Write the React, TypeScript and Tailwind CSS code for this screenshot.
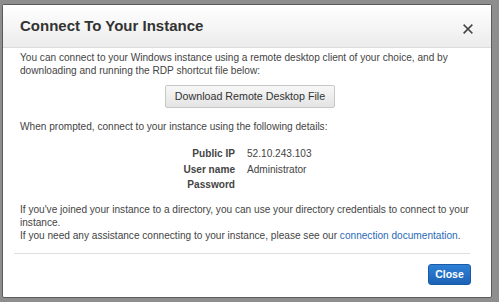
export default function App() {
  return (
    <div className="w-[499px] h-[302px] bg-[#8e8e8e] pt-[4px] pl-[2px] overflow-hidden font-['Liberation_Sans',Arial,sans-serif]">
      <div className="w-[490px] h-[294px] bg-white border border-[#5a5a5a] rounded-[2px] flex flex-col">
        {/* Header */}
        <div className="h-[43px] shrink-0 flex items-center justify-between pl-[17px] pr-[17px] bg-gradient-to-b from-white to-[#ececec] border-b border-[#dcdcdc]">
          <h1 className="text-[15px] font-bold text-[#333]">Connect To Your Instance</h1>
          <button className="text-[#444] w-[12px] h-[12px] mt-[5px] flex items-center justify-center" aria-label="Close">
            <svg viewBox="0 0 12 12" width="10" height="10" stroke="currentColor" strokeWidth="2" strokeLinecap="square">
              <path d="M1.5 1.5l9 9M10.5 1.5l-9 9" />
            </svg>
          </button>
        </div>

        {/* Body */}
        <div className="flex-1 flex flex-col px-[17px] pt-[3px] text-[10.1px] leading-[13px] text-[#444]">
          <p>
            You can connect to your Windows instance using a remote desktop client of your choice, and by
            downloading and running the RDP shortcut file below:
          </p>

          <div className="flex justify-center mt-[8px]">
            <button className="h-[23px] px-[9px] ml-[6px] border border-[#c8c8c8] rounded-[2px] bg-gradient-to-b from-[#f7f7f7] to-[#e4e4e4] text-[10.7px] text-[#333]">
              Download Remote Desktop File
            </button>
          </div>

          <p className="mt-[12px]">When prompted, connect to your instance using the following details:</p>

          <div className="grid grid-cols-[215px_1fr] gap-x-[12px] mt-[13px] leading-[15.5px]">
            <span className="text-right font-bold">Public IP</span>
            <span>52.10.243.103</span>
            <span className="text-right font-bold">User name</span>
            <span>Administrator</span>
            <span className="text-right font-bold">Password</span>
            <span></span>
          </div>

          <p className="mt-[10px]">
            If you've joined your instance to a directory, you can use your directory credentials to connect to your
            instance.
            <br />
            If you need any assistance connecting to your instance, please see our{" "}
            <a className="text-[#2a6ab5]" href="#">connection documentation</a>.
          </p>

          <div className="border-t border-[#dedede] mt-[11px] ml-[-6px] mr-[4px]"></div>

          <div className="flex justify-end mr-[3px] mt-[10px]">
            <button className="w-[43px] h-[21px] rounded-[3px] border border-[#1a5ba8] bg-gradient-to-b from-[#2f80d6] to-[#1b62b5] text-white font-bold text-[10.5px]">
              Close
            </button>
          </div>
        </div>
      </div>
    </div>
  );
}
